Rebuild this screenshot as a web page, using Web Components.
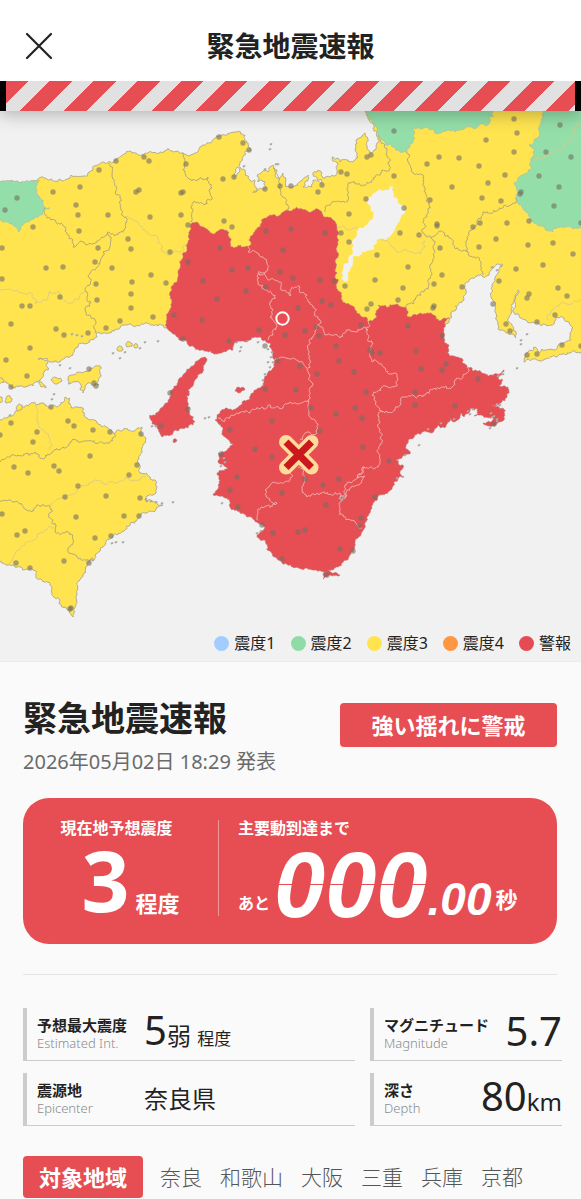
<!DOCTYPE html>
<html lang="ja">
<head>
<meta charset="UTF-8">
<meta name="viewport" content="width=device-width, initial-scale=1">
<title>緊急地震速報</title>
<style>
    body {
        margin: 0;
        background: #fafafa;
        color: #222222;
        font-family: 'Noto Sans', 'Noto Sans CJK JP', sans-serif;
    }
</style>
</head>
<body>
<eew-app></eew-app>

<script>
class AlertHeader extends HTMLElement {
    constructor() {
        super();
        this.attachShadow({ mode: 'open' });
        this.shadowRoot.innerHTML = `
            <style>
                :host {
                    display: block;
                    position: relative;
                    z-index: 2;
                    background: #ffffff;
                    box-shadow: 0 4px 16px rgba(0, 0, 0, 0.25);
                }

                .bar {
                    display: grid;
                    grid-template-columns: 40px 1fr 40px;
                    align-items: center;
                    height: 81px;
                    padding: 10px 19px 0;
                    box-sizing: border-box;
                }

                .close {
                    display: flex;
                    align-items: center;
                    justify-content: center;
                    width: 40px;
                    height: 40px;
                    padding: 0;
                    border: none;
                    background: none;
                    cursor: pointer;
                }

                h1 {
                    margin: 0;
                    text-align: center;
                    font-size: 28px;
                    line-height: 40px;
                    font-weight: 700;
                }

                .stripes {
                    height: 30px;
                    border: solid #000000;
                    border-width: 0 6px;
                    background: repeating-linear-gradient(135deg, #e64e53 0 16px, #e1e1e1 16px 31px);
                }
            </style>
            <div class="bar">
                <button class="close" type="button" aria-label="閉じる">
                    <svg width="28" height="28" viewBox="0 0 28 28" fill="none" stroke="#222" stroke-width="2.2" stroke-linecap="round">
                        <path d="M2 2 L26 26 M26 2 L2 26"/>
                    </svg>
                </button>
                <h1><slot></slot></h1>
            </div>
            <div class="stripes"></div>
        `;
    }
}
customElements.define('alert-header', AlertHeader);

// Outlines, in map units
const HONSHU = '0,183 20,183 36,181 45,178 48,180 60,179 75,176 88,173 95,166 105,163 115,160 124,154 130,151 135,153 148,153 160,152 172,151 182,153 188,156 196,153 200,147 210,143 220,136 230,133 238,131 245,135 248,143 251,150 245,155 240,163 235,173 234,177 238,173 240,167 245,170 245,175 250,180 255,180 257,188 253,193 258,190 266,188 265,182 262,180 258,182 257,175 268,172 273,165 277,170 275,175 280,178 283,173 286,178 285,186 291,187 295,186 302,180 308,175 305,182 303,187 312,187 313,180 322,183 317,178 313,173 318,170 322,173 323,178 330,177 337,172 338,165 332,160 332,157 337,158 340,162 348,160 353,162 358,157 355,150 356,141 362,137 365,133 368,138 367,147 370,153 374,150 377,143 377,132 373,123 368,117 364,108 600,100 600,345 563,354 544,360 524,362 528,352 534,347 539,352 554,350 563,343 571,340 570,333 573,328 569,322 564,318 556,317 551,325 546,325 538,323 528,323 519,315 513,312 514,300 518,290 514,302 511,310 509,322 513,330 516,338 506,333 498,325 496,313 493,300 491,297 492,285 498,273 503,265 496,265 493,268 489,275 483,277 478,275 469,280 464,288 464,300 456,310 449,320 430,335 380,330 340,300 240,255 200,240 185,300 167,328 163,325 153,325 145,323 133,326 127,325 120,328 112,331 103,333 98,332 97,337 90,340 83,343 78,347 74,350 73,355 65,358 60,362 52,362 47,358 38,359 48,363 48,370 43,373 38,382 33,386 25,387 17,386 12,388 7,383 -9,378 -9,183';
const SHIKOKU = '-9,428 7,418 15,412 25,407 32,402 40,403 50,407 60,405 65,397 70,398 71,408 75,407 83,408 87,418 97,422 107,427 113,433 123,430 133,431 142,427 140,433 146,438 142,448 138,463 140,473 148,475 157,487 153,495 145,500 163,505 147,513 137,520 125,530 112,537 103,547 95,555 88,563 83,575 78,588 75,607 73,617 68,610 62,607 60,600 52,593 50,585 42,580 33,570 20,567 8,565 -9,561';
const ISLANDS = [
    '68,380 72,375 83,373 100,366 101,375 99,385 90,383 83,393 81,385 75,382 68,384',
    '51,380 57,378 62,381 57,384', '39,382 42,383 46,388 41,387', '-5,379 2,378 4,382 -5,383',
    '6,398 10,396 11,402 6,403', '-5,398 2,397 2,402 -5,403', '16,408 22,405 22,409 17,411',
    '117,348 122,347 122,351 118,351', '126,344 130,342 132,346 127,347', '134,345 137,344 138,347 135,348'
];
const GREEN = [
    '-9,183 20,183 36,181 40,180 37,190 43,200 45,207 50,208 35,217 23,225 18,232 13,225 -9,216',
    '362,108 368,117 373,123 377,132 386,145 394,147 406,152 413,142 413,130 428,128 441,133 448,130 488,125 489,117 493,117 493,100 362,100',
    '541,100 541,120 540,133 529,145 535,150 531,162 528,173 514,183 516,198 528,213 533,222 544,227 553,232 564,227 600,230 600,100'
];
const LAKE = '390,185 386,190 380,189 368,197 369,205 373,217 367,225 357,233 352,243 353,251 348,263 342,272 341,278 344,282 348,281 350,270 353,257 360,255 373,250 377,242 390,237 396,227 405,213 403,205 394,197 393,187';
const WARNING = [
    '192,223 203,227 213,234 218,231 227,231 233,247 248,247 250,237 257,228 267,218 283,212 293,209 307,211 322,213 333,220 337,228 337,247 335,270 337,283 342,300 350,305 355,310 365,317 368,322 377,317 378,305 394,305 406,308 408,317 428,313 436,319 449,318 444,330 444,342 449,345 449,355 461,358 467,367 481,372 489,376 497,374 504,370 498,378 503,380 499,385 508,387 507,397 502,402 492,405 503,408 504,420 496,425 483,423 492,421 493,416 488,418 481,415 474,416 478,409 471,408 464,417 461,413 459,419 453,422 450,418 447,424 441,428 438,425 434,431 428,432 421,434 414,437 408,443 406,449 410,454 403,456 396,460 403,465 400,471 404,477 394,482 392,489 381,495 377,497 372,508 365,523 358,538 353,552 343,562 328,570 332,573 340,575 323,579 327,572 307,568 290,565 278,560 267,550 265,540 257,537 265,528 257,522 240,513 230,507 227,498 213,495 218,485 217,473 228,468 218,462 218,453 233,445 225,437 222,427 215,420 220,413 237,408 248,400 260,388 267,375 275,360 272,350 270,343 260,337 250,340 237,342 233,350 213,353 203,350 187,342 177,337 167,328 167,317 172,303 172,290 178,277 180,263 187,247 190,230',
    '205,357 206,362 197,378 188,390 188,403 195,422 173,433 162,437 158,429 152,424 150,415 158,412 163,407 172,390 182,377 190,368 200,359',
    '235,391 243,387 245,389 238,393', '173,441 176,439 176,442 174,443'
];
const BORDERS = [
    '108,163 112,177 115,193 120,198 121,208 126,217 126,227 115,236 107,233 97,241 73,247 68,235 63,225 47,218 45,208',
    '107,233 110,247 103,252 100,262 90,273 87,292 90,306 85,310 95,320 95,333',
    '182,153 183,170 192,181 208,177 211,200 205,205 193,202 190,222',
    '273,168 279,188 285,198 287,210', '325,212 332,202 347,202 352,182 360,185 373,178 382,170 389,170 387,150 378,135',
    '406,152 408,162 413,173 423,175 424,187 430,203 424,220 423,233 431,238 443,232 448,235 459,250 468,252 481,267 483,275',
    '468,252 469,235 483,212 498,210 514,203 516,198', '431,238 434,250 431,270 425,290 415,300 406,308',
    '-5,469 10,457 35,452 45,458 52,452 65,448 72,440 110,442 115,433',
    '-5,502 20,504 32,512 38,505 50,506 53,520 55,532 68,532 73,540 69,547 77,557 93,558'
];
const SOFT_BORDERS = [
    '126,217 143,230 155,235 161,250 167,254 180,252 190,242', '-5,291 20,293 30,292 35,304 45,300 50,291 60,293 70,303 85,292',
    '338,228 350,230 358,227', '381,240 393,248 397,252 420,254 425,247 424,240', '534,162 544,158 564,147 574,137 576,125 585,122',
    '548,320 551,312 561,303 585,301', '34,402 36,420 45,432 50,450', '50,506 65,498 85,485 110,481 140,480 146,477',
    '10,565 25,545 45,530 54,527'
];
const WARNING_BORDERS = [
    '248,247 248,252 257,253 267,263 266,272 258,273 258,283 265,290 275,295 272,300 270,317 277,327 273,335 268,340',
    '258,272 268,280 280,282 281,290 290,296 295,287 300,287 301,293 307,295 313,306 320,320 317,325 313,337 308,350 310,363 307,370 312,383 310,397 308,400 310,417 318,425 317,433 305,433 300,440',
    '317,325 325,335 340,338 348,330 368,330 373,343 370,355 372,362 385,368 391,374 396,373 398,380 394,387 381,388 374,392 374,399 378,407 383,412',
    '368,322 366,330', '275,360 290,359 300,362 307,368', '308,400 290,402 283,408 270,405 250,413 235,415 225,421 218,418',
    '467,367 467,373 455,380 452,387 440,388 425,395 405,397 400,405 385,413 378,415 380,430 378,467 363,467 355,480 345,485 347,495 340,497',
    '363,467 357,478 365,476 360,484 350,488 342,500',
    '298,467 305,477 302,490 307,497 323,492 340,493 340,510 350,520 362,528',
    '290,473 290,480 270,485 265,490 268,498 277,503 262,507 258,520'
];
const SPECKS = '237,342 241,347 247,341 240,351 268,349 271,357 273,362 270,367 265,374 263,380 268,362 272,352 258,342 140,348 145,342 158,341 125,352 113,353 120,358 72,334 77,335 82,336 146,499 151,501 156,502 162,503 147,501 173,502 123,542 116,542 112,543 93,560 271,144 270,149 265,169 278,164 276,164 244,166 70,368 60,365 54,394 52,399 10,415 152,426 156,426 205,418 209,417 225,462 221,466 224,458 222,503 257,533 261,531 340,498 343,496 342,500 468,411 473,409 470,414 491,413 494,416 497,419 492,417 497,421 500,405 497,404 503,374 498,376 517,368 527,334 521,340 521,344 492,267 497,270 501,266 419,445 405,455 397,478 428,429 441,423 454,419 490,428';
const STATIONS = '17,198 5,210 53,192 80,187 76,205 78,215 33,227 79,231 108,215 99,170 116,161 144,157 149,161 186,164 136,192 139,190 181,193 183,192 150,217 181,215 188,225 128,239 131,249 170,252 98,248 95,262 112,268 46,268 63,267 2,248 2,279 96,284 132,282 151,275 166,283 188,262 97,300 131,294 131,308 60,297 22,306 30,306 219,137 243,143 249,150 223,179 234,177 265,189 280,186 291,186 224,221 232,227 266,231 291,229 325,233 283,250 220,248 232,270 248,268 203,281 280,272 293,278 320,280 334,281 217,299 246,291 266,287 345,286 341,233 349,242 349,214 366,199 318,192 322,185 341,172 347,174 367,157 371,155 377,255 375,280 371,304 367,309 322,301 331,305 298,308 394,131 394,176 427,164 439,157 459,158 486,140 514,119 517,133 514,152 479,166 505,175 488,183 452,187 482,198 501,201 430,200 404,208 437,224 437,226 400,233 419,235 473,227 480,223 507,223 529,221 520,194 521,192 546,152 560,125 571,157 539,176 559,187 554,206 581,223 496,239 479,247 528,245 553,243 573,254 516,269 543,265 440,248 442,275 434,284 462,287 408,267 403,288 398,300 434,306 433,308 499,281 493,304 529,294 527,298 558,288 567,296 11,324 56,329 64,335 88,333 106,328 120,321 153,317 30,348 6,360 27,376 11,387 89,369 94,383 96,386 51,407 11,423 0,435 37,432 33,442 68,421 74,426 93,430 110,432 141,434 90,456 137,465 129,475 14,467 28,473 54,466 59,471 78,486 65,497 106,496 140,498 174,315 183,339 170,393 188,409 161,426 202,320 259,330 229,341 265,346 285,335 305,331 319,336 316,327 336,346 339,361 354,372 317,374 300,366 278,361 265,389 296,390 311,408 272,421 230,430 255,449 272,457 221,454 237,477 230,490 336,414 355,408 362,418 320,431 363,447 366,392 372,353 370,350 380,353 361,325 339,479 323,485 305,479 282,493 389,461 408,326 442,336 416,351 446,364 442,370 421,369 478,379 415,392 415,405 455,406 494,424 506,324 510,331 537,322 555,315 527,355 537,354 562,345 581,346 2,514 17,535 25,531 16,563 30,568 64,561 89,563 71,608 70,609 76,517 95,538 111,536 124,516 139,516 326,505 298,532 305,530 273,533 262,525 340,549 353,551 327,575 282,559 238,507 375,497 361,518 359,526';

const parse = (text) => text.split(' ').map(p => p.split(',').map(Number));

// Breaks each straight run into small irregular steps so coasts look natural
function coast(text, amount, closed) {
    const pts = parse(text);
    if (closed) pts.push(pts[0]);
    let seed = 11;
    const random = () => {
        seed = (seed * 16807) % 2147483647;
        return seed / 2147483647 - 0.5;
    };
    const out = [pts[0]];
    const split = (a, b) => {
        const dx = b[0] - a[0];
        const dy = b[1] - a[1];
        const length = Math.hypot(dx, dy);
        if (length < 2) {
            out.push(b);
            return;
        }
        // long runs get no more swing than short ones
        const k = random() * amount * Math.min(1, 7 / length);
        const mid = [(a[0] + b[0]) / 2 - dy * k, (a[1] + b[1]) / 2 + dx * k];
        split(a, mid);
        split(mid, b);
    };
    for (let i = 1; i < pts.length; i++) split(pts[i - 1], pts[i]);
    return 'M' + out.map(p => p[0].toFixed(1) + ' ' + p[1].toFixed(1)).join('L') + (closed ? 'Z' : '');
}

class QuakeMap extends HTMLElement {
    constructor() {
        super();
        this.attachShadow({ mode: 'open' });
        const area = (text, cls) => `<path class="${cls}" d="${coast(text, 0.6, true)}"/>`;
        const line = (text, cls) => `<path class="${cls}" d="${coast(text, 0.7, false)}"/>`;
        this.shadowRoot.innerHTML = `
            <style>
                :host {
                    display: grid;
                    background: #f1f1f1;
                    border-bottom: 1px solid #ececec;
                }

                svg, .legend {
                    grid-area: 1 / 1;
                }

                svg {
                    display: block;
                    width: 100%;
                    height: auto;
                }

                .legend {
                    align-self: end;
                    justify-self: end;
                    padding: 0 10px 6px 0;
                }

                path { stroke-linejoin: round; }
                .land { fill: #ffe450; stroke: #aaa58f; stroke-width: 0.9; }
                .two { fill: #94dea9; stroke: #a8bba9; stroke-width: 0.6; }
                .lake { fill: #f1f1f1; }
                .warn { fill: #e64e53; stroke: #bd7477; stroke-width: 0.6; }
                .border, .soft, .warn-border { fill: none; stroke-width: 0.9; }
                .border { stroke: #aaa27b; }
                .soft { stroke: #d9cb83; }
                .warn-border { stroke: #f0b4b0; }
                .speck { fill: #aaa9a3; }
                .station { fill: #746e62; fill-opacity: 0.6; }
            </style>
            <svg viewBox="0 111 581 550" role="img" aria-label="震度分布図">
                ${area(HONSHU, 'land')}
                ${area(SHIKOKU, 'land')}
                ${ISLANDS.map(p => area(p, 'land')).join('')}
                ${GREEN.map(p => area(p, 'two')).join('')}
                ${area(LAKE, 'lake')}
                ${BORDERS.map(p => line(p, 'border')).join('')}
                ${SOFT_BORDERS.map(p => line(p, 'soft')).join('')}
                ${WARNING.map(p => area(p, 'warn')).join('')}
                ${WARNING_BORDERS.map(p => line(p, 'warn-border')).join('')}
                ${parse(SPECKS).map(([x, y]) => `<path class="speck" d="M${x - 1.5} ${y}l1.6-1 1.5.7-.8 1.3-1.6.4z"/>`).join('')}
                ${parse(STATIONS).map(([x, y]) => `<circle class="station" cx="${x}" cy="${y}" r="2.7"/>`).join('')}
                <circle cx="282.5" cy="318.5" r="6.2" fill="none" stroke="#fff" stroke-width="2"/>
                <g fill="none">
                    <path d="M286 442L311.500 467.500M311.500 442L286 467.500" stroke="#fddc9b" stroke-width="14" stroke-linecap="round"/>
                    <path d="M286 442L311.500 467.500M311.500 442L286 467.500" stroke="#cb181e" stroke-width="7"/>
                </g>
            </svg>
            <div class="legend"><slot></slot></div>
        `;
    }
}
customElements.define('quake-map', QuakeMap);

class MapLegend extends HTMLElement {
    constructor() {
        super();
        this.attachShadow({ mode: 'open' });
        this.shadowRoot.innerHTML = `
            <style>
                :host { display: block; }

                ul {
                    display: flex;
                    gap: 15px;
                    margin: 0;
                    padding: 0;
                    list-style: none;
                    font-size: 16px;
                    line-height: 24px;
                }

                li {
                    display: flex;
                    align-items: center;
                    gap: 5px;
                }

                li::before {
                    content: '';
                    width: 15px;
                    height: 15px;
                    border-radius: 50%;
                    background: var(--dot);
                }
            </style>
            <ul>
                <li style="--dot: #a3ccff">震度1</li>
                <li style="--dot: #90dca6">震度2</li>
                <li style="--dot: #ffe44f">震度3</li>
                <li style="--dot: #ff9642">震度4</li>
                <li style="--dot: #e54c52">警報</li>
            </ul>
        `;
    }
}
customElements.define('map-legend', MapLegend);

class AlertTag extends HTMLElement {
    constructor() {
        super();
        this.attachShadow({ mode: 'open' });
        this.shadowRoot.innerHTML = `
            <style>
                :host {
                    display: block;
                    box-sizing: border-box;
                    padding: 6px 16px;
                    border-radius: 4px;
                    background: #e64e53;
                    color: #ffffff;
                    font-size: 22px;
                    line-height: 32px;
                    font-weight: 700;
                    text-align: center;
                    white-space: nowrap;
                }
            </style>
            <slot></slot>
        `;
    }
}
customElements.define('alert-tag', AlertTag);

class CountdownCard extends HTMLElement {
    constructor() {
        super();
        this.attachShadow({ mode: 'open' });
        this.shadowRoot.innerHTML = `
            <style>
                :host {
                    display: grid;
                    grid-template-columns: 195px 1px 1fr;
                    box-sizing: border-box;
                    padding: 18px 20px 21px 0;
                    border-radius: 26px;
                    background: #e64e53;
                    color: #ffffff;
                    font-weight: 700;
                }

                .label {
                    font-size: 16px;
                    line-height: 24px;
                }

                .here {
                    display: flex;
                    flex-direction: column;
                    align-items: center;
                    padding-right: 8px;
                }

                .divider {
                    margin: 4px 0 7px;
                    background: #f0989a;
                }

                .wait { padding-left: 19px; }

                .value {
                    display: flex;
                    align-items: flex-end;
                    margin-top: 7px;
                }

                .here .value {
                    align-items: baseline;
                    gap: 6px;
                    padding-left: 28px;
                }

                .level {
                    font-size: 84px;
                    line-height: 66px;
                }

                .unit {
                    font-size: 22px;
                    line-height: 24px;
                }

                .prefix {
                    padding-bottom: 8px;
                    margin-right: 4px;
                    font-size: 16px;
                    line-height: 24px;
                }

                .digits, .fraction {
                    font-family: 'Liberation Sans', sans-serif;
                    font-style: italic;
                }

                .digits {
                    font-size: 92px;
                    line-height: 76px;
                    background: linear-gradient(#ffffff 0 37px, #e64e53 37px 38px, #ffffff 38px);
                    background-clip: text;
                    -webkit-background-clip: text;
                    color: transparent;
                }

                .fraction {
                    font-size: 46px;
                    line-height: 48px;
                }

                .seconds {
                    padding-bottom: 8px;
                    margin-left: 4px;
                    font-size: 22px;
                    line-height: 32px;
                }
            </style>
            <div class="here">
                <div class="label">現在地予想震度</div>
                <div class="value"><span class="level">3</span><span class="unit">程度</span></div>
            </div>
            <div class="divider"></div>
            <div class="wait">
                <div class="label">主要動到達まで</div>
                <div class="value">
                    <span class="prefix">あと</span><span class="digits">000</span><span class="fraction">.00</span><span class="seconds">秒</span>
                </div>
            </div>
        `;
    }
}
customElements.define('countdown-card', CountdownCard);

class StatBox extends HTMLElement {
    constructor() {
        super();
        this.attachShadow({ mode: 'open' });
        this.shadowRoot.innerHTML = `
            <style>
                :host {
                    display: flex;
                    align-items: center;
                    box-sizing: border-box;
                    height: 53px;
                    padding-left: 10px;
                    border-left: 4px solid #cccccc;
                    border-bottom: 1px solid #cccccc;
                    white-space: nowrap;
                }

                .names { flex: 0 0 107px; }

                .name {
                    font-size: 15px;
                    line-height: 18px;
                    font-weight: 700;
                }

                .sub {
                    color: #8b8b8b;
                    font-size: 13px;
                    line-height: 18px;
                    font-weight: 300;
                }

                .value {
                    flex: 1;
                    font-size: 24px;
                    line-height: 48px;
                }

                :host([end]) .names { flex-basis: auto; }
                :host([end]) .value { text-align: right; }
                ::slotted(b) { font-size: 40px; font-weight: 400; }
                ::slotted(small) { font-size: 17px; }
            </style>
            <div class="names">
                <div class="name"><slot name="name"></slot></div>
                <div class="sub"><slot name="sub"></slot></div>
            </div>
            <div class="value"><slot></slot></div>
        `;
    }
}
customElements.define('stat-box', StatBox);

class EewApp extends HTMLElement {
    constructor() {
        super();
        this.attachShadow({ mode: 'open' });
        this.shadowRoot.innerHTML = `
            <style>
                :host { display: block; }

                main {
                    padding: 34px 19px 0 23px;
                }

                .top {
                    display: flex;
                    justify-content: space-between;
                    align-items: flex-start;
                    margin-right: 5px;
                }

                h2 {
                    margin: 0;
                    font-size: 34px;
                    line-height: 44px;
                    font-weight: 700;
                }

                .top alert-tag {
                    width: 217px;
                    margin-top: 7px;
                }

                time {
                    display: block;
                    color: #6b6b6b;
                    font-size: 20px;
                    line-height: 30px;
                    margin: 0 0 21px;
                }

                countdown-card { margin-right: 5px; }

                hr {
                    margin: 30px 5px 33px 0;
                    border: none;
                    border-top: 1px solid #e4e4e4;
                }

                .stats {
                    display: grid;
                    grid-template-columns: 332fr 192fr;
                    gap: 12px 15px;
                }

                .areas {
                    display: flex;
                    align-items: center;
                    gap: 17px;
                    margin-top: 30px;
                }

                .areas alert-tag { padding: 5px 16px; }

                .areas ul {
                    display: flex;
                    gap: 18px;
                    margin: 0;
                    padding: 0;
                    list-style: none;
                    color: #555555;
                    font-size: 21px;
                    line-height: 32px;
                    font-weight: 300;
                    white-space: nowrap;
                }
            </style>
            <alert-header>緊急地震速報</alert-header>
            <quake-map><map-legend></map-legend></quake-map>
            <main>
                <div class="top">
                    <h2>緊急地震速報</h2>
                    <alert-tag>強い揺れに警戒</alert-tag>
                </div>
                <time datetime="2026-05-02T18:29">2026年05月02日 18:29 発表</time>
                <countdown-card></countdown-card>
                <hr>
                <div class="stats">
                    <stat-box><span slot="name">予想最大震度</span><span slot="sub">Estimated Int.</span><b>5</b>弱 <small>程度</small></stat-box>
                    <stat-box end><span slot="name">マグニチュード</span><span slot="sub">Magnitude</span><b>5.7</b></stat-box>
                    <stat-box><span slot="name">震源地</span><span slot="sub">Epicenter</span>奈良県</stat-box>
                    <stat-box end><span slot="name">深さ</span><span slot="sub">Depth</span><b>80</b>km</stat-box>
                </div>
                <div class="areas">
                    <alert-tag>対象地域</alert-tag>
                    <ul><li>奈良</li><li>和歌山</li><li>大阪</li><li>三重</li><li>兵庫</li><li>京都</li></ul>
                </div>
            </main>
        `;
    }
}
customElements.define('eew-app', EewApp);
</script>
</body>
</html>
